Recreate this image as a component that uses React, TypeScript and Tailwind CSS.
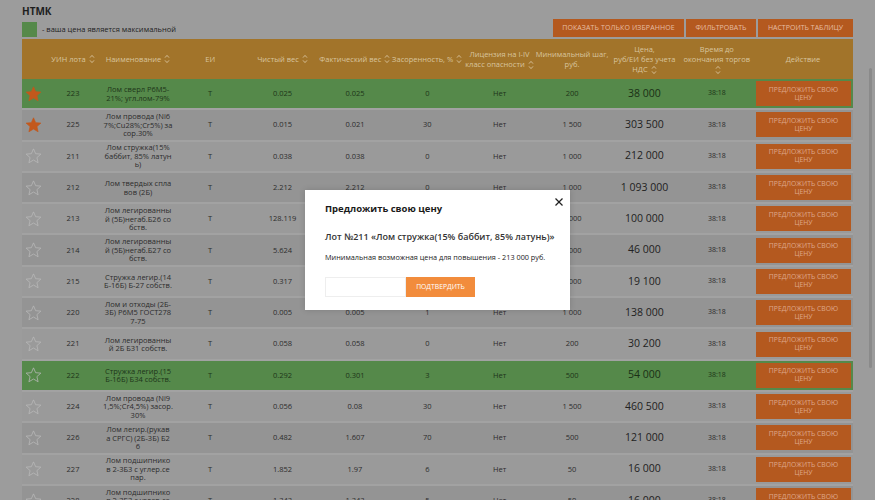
import React from "react";

type Row = {
  fav: boolean;
  id: string;
  name: string[];
  net: string;
  fact: string;
  zas: string;
  min: string;
  price: string;
  green?: boolean;
};

const rows: Row[] = [
  { fav: true, id: "223", name: ["Лом сверл Р6М5-", "21%; угл.лом-79%"], net: "0.025", fact: "0.025", zas: "0", min: "200", price: "38 000", green: true },
  { fav: true, id: "225", name: ["Лом провода (Ni6", "7%;Cu28%;Cr5%) за", "сор.30%"], net: "0.015", fact: "0.021", zas: "30", min: "1 500", price: "303 500" },
  { fav: false, id: "211", name: ["Лом стружка(15%", "баббит, 85% латун", "ь)"], net: "0.038", fact: "0.038", zas: "0", min: "1 000", price: "212 000" },
  { fav: false, id: "212", name: ["Лом твердых спла", "вов (2Б)"], net: "2.212", fact: "2.212", zas: "0", min: "1 000", price: "1 093 000" },
  { fav: false, id: "213", name: ["Лом легированны", "й (5Б)негаб.Б26 со", "бств."], net: "128.119", fact: "128.119", zas: "0", min: "1 000", price: "100 000" },
  { fav: false, id: "214", name: ["Лом легированны", "й (5Б)негаб.Б27 со", "бств."], net: "5.624", fact: "5.624", zas: "0", min: "1 000", price: "46 000" },
  { fav: false, id: "215", name: ["Стружка легир.(14", "Б-16Б) Б-27 собств."], net: "0.317", fact: "0.317", zas: "0", min: "1 000", price: "19 100" },
  { fav: false, id: "220", name: ["Лом и отходы (2Б-", "3Б) Р6М5 ГОСТ278", "7-75"], net: "0.005", fact: "0.005", zas: "1", min: "1 000", price: "138 000" },
  { fav: false, id: "221", name: ["Лом легированны", "й 2Б Б31 собств."], net: "0.058", fact: "0.058", zas: "0", min: "200", price: "30 200" },
  { fav: false, id: "222", name: ["Стружка легир.(15", "Б-16Б) Б34 собств."], net: "0.292", fact: "0.301", zas: "3", min: "500", price: "54 000", green: true },
  { fav: false, id: "224", name: ["Лом провода (Ni9", "1,5%;Cr4,5%) засор.", "30%"], net: "0.056", fact: "0.08", zas: "30", min: "1 500", price: "460 500" },
  { fav: false, id: "226", name: ["Лом легир.(рукав", "а СРГС) (2Б-3Б) Б2", "6"], net: "0.482", fact: "1.607", zas: "70", min: "500", price: "121 000" },
  { fav: false, id: "227", name: ["Лом подшипнико", "в 2-3Б3 с углер.се", "пар."], net: "1.852", fact: "1.97", zas: "6", min: "50", price: "16 000" },
  { fav: false, id: "228", name: ["Лом подшипнико", "в 2-3Б3 с углер.се", "пар."], net: "1.343", fact: "1.343", zas: "5", min: "50", price: "16 000" },
];

function Star({ filled }: { filled: boolean }) {
  return (
    <svg width="17" height="16" viewBox="0 0 24 23">
      <polygon
        points="12,1.2 15.1,8.2 22.6,8.8 16.9,13.8 18.6,21.2 12,17.3 5.4,21.2 7.1,13.8 1.4,8.8 8.9,8.2"
        fill={filled ? "#c2581c" : "none"}
        stroke={filled ? "#c2581c" : "#b9b9b9"}
        strokeWidth={filled ? 1 : 1.1}
        strokeLinejoin="round"
      />
    </svg>
  );
}

function Sort() {
  return (
    <svg width="6" height="10" viewBox="0 0 6 10" className="inline-block align-middle ml-[3px]">
      <polyline points="1,3.6 3,1.4 5,3.6" fill="none" stroke="#d8c49e" strokeWidth="0.9" />
      <polyline points="1,6.4 3,8.6 5,6.4" fill="none" stroke="#d8c49e" strokeWidth="0.9" />
    </svg>
  );
}

const grid = "grid grid-cols-[22px_58px_72px_repeat(8,1fr)_100px]";

export default function App() {
  return (
    <div
      className="relative w-[875px] h-[500px] overflow-hidden bg-[#9c9c9c]"
      style={{ fontFamily: '"Open Sans", "Noto Sans", sans-serif' }}
    >
      <div className="px-[22px] pt-[6px]">
        <div className="text-[10px] leading-[11px] font-bold text-[#1e1e1e]">НТМК</div>
        <div className="mt-[2px] h-[18px] flex items-end justify-between">
          <div className="flex items-center">
            <div className="w-[15px] h-[15px] bg-[#55894a]" />
            <span className="ml-[5px] text-[7.5px] text-[#1e1e1e]">- ваша цена является максимальной</span>
          </div>
          <div className="flex gap-[2px] h-[18px]">
            <div className="w-[131px] bg-[#b4591f] text-[#e6bda3] text-[7px] flex items-center justify-center tracking-[0.1px]">
              ПОКАЗАТЬ ТОЛЬКО ИЗБРАННОЕ
            </div>
            <div className="w-[70px] bg-[#b4591f] text-[#e6bda3] text-[7px] flex items-center justify-center">
              ФИЛЬТРОВАТЬ
            </div>
            <div className="w-[95px] bg-[#b4591f] text-[#e6bda3] text-[7px] flex items-center justify-center">
              НАСТРОИТЬ ТАБЛИЦУ
            </div>
          </div>
        </div>

        <div className="mt-[2px] w-[831px]">
          <div className={`${grid} h-[40px] bg-[#a2742a] text-[#d8c49e] text-[7.5px] leading-[10px]`}>
            <div />
            <div className="flex items-center justify-center whitespace-nowrap">УИН лота<Sort /></div>
            <div className="flex items-center justify-center whitespace-nowrap">Наименование<Sort /></div>
            <div className="flex items-center justify-center">ЕИ</div>
            <div className="flex items-center justify-center whitespace-nowrap">Чистый вес<Sort /></div>
            <div className="flex items-center justify-center whitespace-nowrap">Фактический вес<Sort /></div>
            <div className="flex items-center justify-center whitespace-nowrap">Засоренность, %<Sort /></div>
            <div className="flex items-center justify-center text-center whitespace-nowrap">
              <div>Лицензия на I-IV<br />класс опасности<Sort /></div>
            </div>
            <div className="flex items-center justify-center text-center whitespace-nowrap">
              <div>Минимальный шаг,<br />руб.</div>
            </div>
            <div className="flex items-center justify-center text-center whitespace-nowrap">
              <div>Цена,<br />руб/ЕИ без учета<br />НДС<Sort /></div>
            </div>
            <div className="flex items-center justify-center text-center whitespace-nowrap">
              <div>Время до<br />окончания торгов<br /><Sort /></div>
            </div>
            <div className="flex items-center justify-center">Действие</div>
          </div>

          {rows.map((r, i) => {
            const bg = r.green ? "bg-[#55894a]" : i % 2 === 1 ? "bg-[#949494]" : "bg-[#9a9a9a]";
            const txt = r.green ? "text-[#1d3519]" : "text-[#2c2c2c]";
            return (
              <div key={i} className={`${grid} h-[31.3px] border-b-[2px] border-[#a2a2a2] ${bg} ${txt} text-[7.5px]`}>
                <div className="flex items-center justify-center pl-[1px]">
                  <Star filled={r.fav} />
                </div>
                <div className="flex items-center justify-center">{r.id}</div>
                <div className="flex items-center justify-center text-center leading-[8.5px]">
                  <div>
                    {r.name.map((l, k) => (
                      <div key={k} className="whitespace-nowrap">{l}</div>
                    ))}
                  </div>
                </div>
                <div className="flex items-center justify-center">Т</div>
                <div className="flex items-center justify-center">{r.net}</div>
                <div className="flex items-center justify-center">{r.fact}</div>
                <div className="flex items-center justify-center">{r.zas}</div>
                <div className="flex items-center justify-center">Нет</div>
                <div className="flex items-center justify-center">{r.min}</div>
                <div className={`flex items-center justify-center text-[10.5px] ${r.green ? "text-[#1a3016]" : "text-[#222]"}`}>{r.price}</div>
                <div className="flex items-center justify-center text-[7px]">38:18</div>
                <div className="flex items-center pl-[3px] pr-[2px]">
                  <div className="w-full h-[25px] bg-[#b4591f] text-[#dea78a] text-[6.8px] leading-[8px] flex items-center justify-center text-center">
                    <div>ПРЕДЛОЖИТЬ СВОЮ<br />ЦЕНУ</div>
                  </div>
                </div>
              </div>
            );
          })}
        </div>
      </div>

      <div className="absolute right-[3px] top-[68px] w-[3px] h-[300px] bg-[#8a8a8a] rounded-full" />

      <div className="absolute left-[305px] top-[190px] w-[265px] h-[120px] bg-white shadow-[0_0_6px_rgba(0,0,0,0.15)] px-[20px] pt-[13px]">
        <div className="text-[9.5px] leading-[12px] font-bold text-[#1a1a1a]">Предложить свою цену</div>
        <svg className="absolute left-[249px] top-[7px]" width="10" height="10" viewBox="0 0 10 10">
          <line x1="1.5" y1="1.5" x2="8.5" y2="8.5" stroke="#222" strokeWidth="1.3" />
          <line x1="8.5" y1="1.5" x2="1.5" y2="8.5" stroke="#222" strokeWidth="1.3" />
        </svg>
        <div className="mt-[16px] text-[9px] leading-[12px] font-semibold text-[#333] whitespace-nowrap">
          Лот №211 «Лом стружка(15% баббит, 85% латунь)»
        </div>
        <div className="mt-[9px] text-[7.3px] leading-[10px] text-[#222] whitespace-nowrap">
          Минимальная возможная цена для повышения - 213 000 руб.
        </div>
        <div className="mt-[15px] flex h-[20px]">
          <div className="w-[81px] h-full border border-[#eeeeee] bg-white" />
          <div className="w-[69px] h-full bg-[#f28c3c] text-white text-[6.8px] flex items-center justify-center">
            ПОДТВЕРДИТЬ
          </div>
        </div>
      </div>
    </div>
  );
}
